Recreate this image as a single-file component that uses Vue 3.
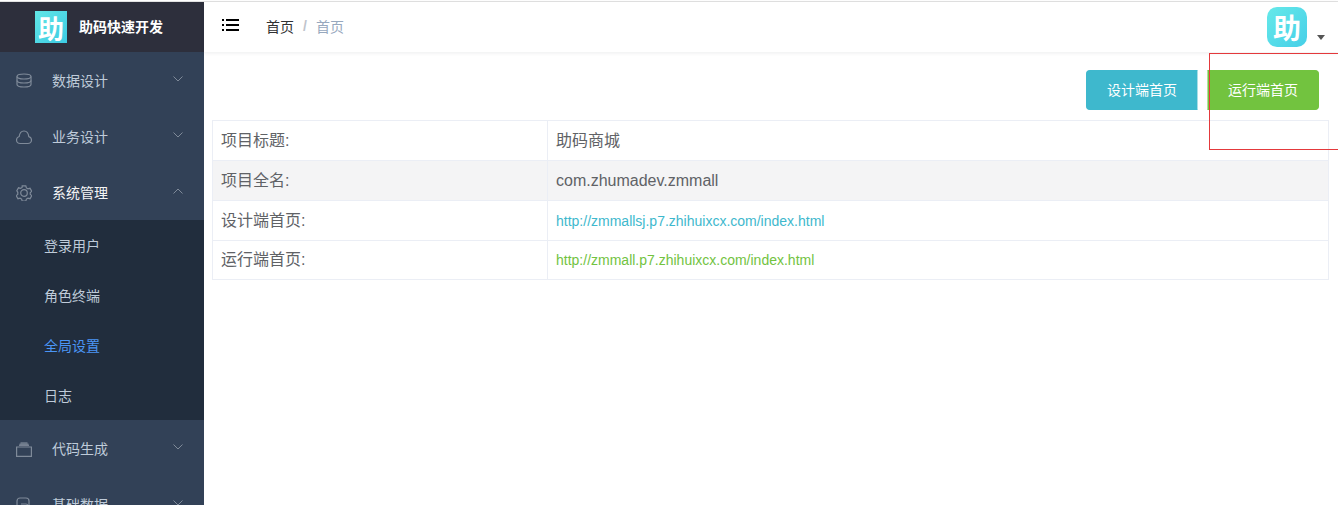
<template>
  <div class="page">
    <div class="frame">
      <aside class="sidebar">
        <div class="brand">
          <span class="brand-logo">助</span>
          <span class="brand-name">助码快速开发</span>
        </div>
        <nav class="menu">
          <template v-for="item in menu" :key="item.title">
            <div class="menu-item" :class="{ open: item.open }">
              <svg class="menu-icon" viewBox="0 0 16 16" fill="none" stroke="currentColor" stroke-width="1.2">
                <path v-for="d in item.icon" :key="d" :d="d" />
              </svg>
              <span class="menu-title">{{ item.title }}</span>
              <svg class="arrow" viewBox="0 0 10 6" fill="none" stroke="currentColor" stroke-width="1">
                <path :d="item.open ? 'M0.5 5.5L5 1l4.5 4.5' : 'M0.5 0.5L5 5l4.5-4.5'" />
              </svg>
            </div>
            <div v-if="item.children" class="submenu">
              <div
                v-for="sub in item.children"
                :key="sub"
                class="submenu-item"
                :class="{ active: sub === '全局设置' }"
              >
                {{ sub }}
              </div>
            </div>
          </template>
        </nav>
      </aside>
      <main class="main">
        <header class="topbar">
          <svg class="toggle" viewBox="0 0 18 14" fill="#000">
            <rect x="0" y="1" width="2" height="2" />
            <rect x="4" y="1" width="13" height="2" />
            <rect x="0" y="6" width="2" height="2" />
            <rect x="4" y="6" width="13" height="2" />
            <rect x="0" y="11" width="2" height="2" />
            <rect x="4" y="11" width="13" height="2" />
          </svg>
          <div class="crumbs">
            <span class="crumb">首页</span>
            <span class="sep">/</span>
            <span class="crumb last">首页</span>
          </div>
          <div class="user">
            <span class="avatar">助</span>
            <span class="caret"></span>
          </div>
        </header>
        <section class="content">
          <div class="actions">
            <button class="btn design">设计端首页</button>
            <button class="btn run">运行端首页</button>
          </div>
          <table class="info">
            <tbody>
              <tr v-for="row in rows" :key="row.label">
                <td class="label">{{ row.label }}</td>
                <td class="value" :class="row.cls">{{ row.value }}</td>
              </tr>
            </tbody>
          </table>
        </section>
        <div class="outline"></div>
      </main>
    </div>
  </div>
</template>

<script setup>
const db = [
  "M1 3.5C1 2 4 1 8 1s7 1 7 2.5S12 6 8 6 1 5 1 3.5z",
  "M1 3.5v8C1 13 4 14 8 14s7-1 7-2.5v-8",
  "M1 7.5C1 9 4 10 8 10s7-1 7-2.5",
];
const cloud = [
  "M4.2 14.5h7.6c2 0 3.7-1.5 3.7-3.5 0-1.7-1.1-3-2.7-3.4C12.4 4.5 10.5 2 8 2S3.6 4.3 3.2 7.5C1.7 8 .5 9.3.5 11c0 2 1.7 3.500 3.700 3.500z",
];
const gear = [
  "M6.2 .9h3.600l.6 2 1.500.9 2.100-.5 1.700 3-1.500 1.500v1.400l1.500 1.500-1.700 3-2.100-.5-1.500.9-.6 2H6.200l-.6-2-1.500-.9-2.100.5-1.700-3 1.500-1.500V7.300L.8 5.800l1.700-3 2.100.5 1.500-.9z",
  "M8 4.700a3.300 3.300 0 1 0 0 6.600 3.300 3.300 0 0 0 0-6.600z",
];
const box = ["M.6 6h14.800v9.400H.6z", "M3 4.300h10", "M3.500 3.200h9", "M4.500 2h7"];
const tag = ["M1 16V4a3 3 0 0 1 3-3h6a3 3 0 0 1 3 3v8", "M5 7h5a2 2 0 0 1 2 2"];

const menu = [
  { title: "数据设计", icon: db },
  { title: "业务设计", icon: cloud },
  {
    title: "系统管理",
    icon: gear,
    open: true,
    children: ["登录用户", "角色终端", "全局设置", "日志"],
  },
  { title: "代码生成", icon: box },
  { title: "基础数据", icon: tag },
];

const rows = [
  { label: "项目标题:", value: "助码商城", cls: "cjk" },
  { label: "项目全名:", value: "com.zhumadev.zmmall" },
  { label: "设计端首页:", value: "http://zmmallsj.p7.zhihuixcx.com/index.html", cls: "link-design" },
  { label: "运行端首页:", value: "http://zmmall.p7.zhihuixcx.com/index.html", cls: "link-run" },
];
</script>

<style>
html,
body {
  margin: 0;
  height: 100%;
  overflow: hidden;
  background: #fff;
}
</style>

<style scoped>
.page {
  height: 505px;
  box-sizing: border-box;
  padding-top: 1px;
  overflow: hidden;
  font-family: "Liberation Sans", "Noto Sans CJK SC", sans-serif;
}
.frame {
  display: flex;
  height: 504px;
  box-sizing: border-box;
  border-top: 1px solid #e2e2e2;
}
.sidebar {
  flex: none;
  width: 204px;
  background: #324157;
  color: #bfcbd9;
  font-size: 14px;
}
.brand {
  display: flex;
  align-items: center;
  gap: 12px;
  height: 50px;
  padding-left: 35px;
  background: #2d2f3c;
}
.brand-logo {
  display: flex;
  align-items: center;
  justify-content: center;
  width: 32px;
  height: 32px;
  background: linear-gradient(135deg, #62e6e6, #3ccbe3);
  color: #fff;
  font-size: 26px;
  font-weight: 700;
}
.brand-name {
  padding-bottom: 2px;
  color: #fff;
  font-size: 14px;
  font-weight: 700;
}
.menu-item {
  display: flex;
  align-items: center;
  height: 56px;
  padding-left: 16px;
}
.menu-item.open .menu-title {
  color: #f4f4f5;
}
.menu-icon {
  flex: none;
  width: 16px;
  height: 16px;
  margin-top: 2px;
  color: #7f8a99;
}
.menu-title {
  margin-left: 20px;
}
.arrow {
  flex: none;
  width: 10px;
  height: 6px;
  margin-left: auto;
  margin-right: 21px;
  margin-top: -2px;
  color: #7f8a99;
}
.submenu {
  background: #212d3d;
}
.submenu-item {
  height: 50px;
  line-height: 52px;
  padding-left: 44px;
}
.submenu-item.active {
  color: #4b95f5;
}
.main {
  position: relative;
  flex: 1;
  min-width: 0;
}
.topbar {
  display: flex;
  align-items: center;
  height: 50px;
  padding-left: 18px;
  box-shadow: 0 1px 4px rgba(0, 21, 41, 0.08);
}
.toggle {
  width: 18px;
  height: 14px;
  margin-top: -4px;
}
.crumbs {
  display: flex;
  align-items: center;
  margin-left: 26px;
  padding-bottom: 2px;
  font-size: 14px;
  color: #303133;
}
.sep {
  margin: 0 9px;
  color: #c0c4cc;
  font-weight: 700;
}
.last {
  color: #97a8be;
}
.user {
  display: flex;
  align-items: flex-end;
  margin-left: auto;
  margin-right: 13px;
}
.avatar {
  display: flex;
  align-items: center;
  justify-content: center;
  width: 40px;
  height: 40px;
  border-radius: 10px;
  background: linear-gradient(135deg, #66e9e9, #46cfe8);
  color: #fff;
  font-size: 28px;
  font-weight: 700;
}
.caret {
  width: 0;
  height: 0;
  margin-left: 10px;
  margin-bottom: 7px;
  border: 4px solid transparent;
  border-top: 5px solid #555;
  border-bottom: 0;
}
.content {
  padding: 18px 9px 0 8px;
}
.actions {
  display: flex;
  justify-content: flex-end;
  gap: 9px;
  padding-right: 10px;
}
.btn {
  width: 112px;
  height: 40px;
  padding: 0 0 2px;
  border: 1px solid;
  border-radius: 4px;
  color: #fff;
  font: inherit;
  font-size: 14px;
}
.btn.design {
  background: #3eb8cd;
  border-color: #3eb8cd;
  border-right-color: #a9dde6;
  border-radius: 4px 0 0 4px;
}
.btn.run {
  background: #72c33f;
  border-color: #72c33f;
  border-left-color: #b5e09a;
  border-radius: 0 4px 4px 0;
}
.info {
  width: 100%;
  margin-top: 10px;
  border-collapse: collapse;
  table-layout: fixed;
  font-size: 16px;
  color: #606266;
}
.info td {
  box-sizing: border-box;
  height: 40px;
  padding: 0 8px;
  border: 1px solid #ebeef5;
}
.info tr:last-child td {
  height: 39px;
}
.info tr:nth-child(2) td {
  background: #f4f4f5;
}
.info .label {
  width: 335px;
  padding-bottom: 4px;
}
.info .cjk {
  padding-bottom: 4px;
}
.link-design {
  color: #3eb8cd;
  font-size: 14px;
}
.link-run {
  color: #72c33f;
  font-size: 14px;
}
.outline {
  position: absolute;
  top: 51px;
  right: 0;
  width: 129px;
  height: 97px;
  box-sizing: border-box;
  border: 1px solid #e4393c;
  border-right: 0;
  pointer-events: none;
}
</style>
